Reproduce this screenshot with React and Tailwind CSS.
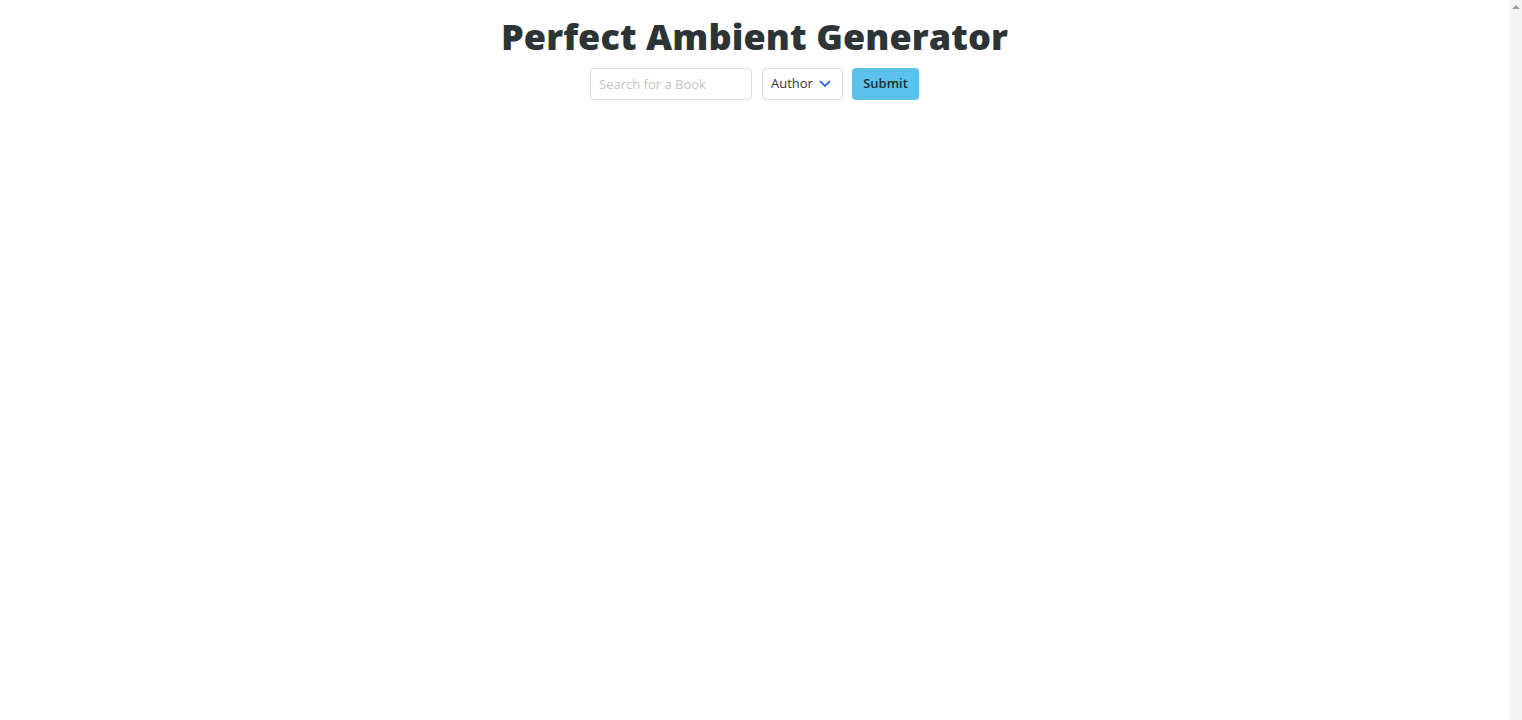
import { useState } from "react";

export default function App() {
  const [query, setQuery] = useState("");
  const [field, setField] = useState("Author");

  return (
    <div className="flex h-[720px] w-full overflow-hidden bg-white font-['Open_Sans',sans-serif]">
      <div className="flex flex-1 flex-col items-center">
        {/* Title */}
        <h1 className="mt-[12px] text-[36px] font-extrabold leading-[50px] tracking-[0.1px] text-[#2d3436]">
          Perfect Ambient Generator
        </h1>

        {/* Search form */}
        <form
          className="mt-[6px] flex items-center"
          onSubmit={(e) => e.preventDefault()}>
          <input
            value={query}
            onChange={(e) => setQuery(e.target.value)}
            placeholder="Search for a Book"
            className="h-[32px] w-[162px] rounded-[4px] border border-[#dcdcdc] px-[8px] text-[13px] text-[#333] placeholder:text-[#c4c4c4] outline-none"
          />
          <div className="relative ml-[10px]">
            <select
              value={field}
              onChange={(e) => setField(e.target.value)}
              className="h-[32px] w-[81px] appearance-none rounded-[4px] border border-[#dcdcdc] bg-white pl-[8px] text-[13px] text-[#333] outline-none">
              <option>Author</option>
              <option>Title</option>
            </select>
            <svg
              className="pointer-events-none absolute right-[12px] top-[12px]"
              width="12"
              height="8"
              viewBox="0 0 12 8"
              fill="none">
              <path d="M1.5 1.5L6 6L10.5 1.5" stroke="#3b6fe0" strokeWidth="1.8" strokeLinecap="round" strokeLinejoin="round" />
            </svg>
          </div>
          <button
            type="submit"
            className="ml-[9px] h-[32px] w-[67px] rounded-[4px] bg-[#5bc2ee] text-[13px] font-semibold text-[#1f2d33]">
            Submit
          </button>
        </form>
      </div>

      {/* Scrollbar */}
      <div className="flex w-[13px] flex-col items-center bg-[#f5f5f5] pt-[5px]">
        <div className="h-0 w-0 border-x-[4px] border-b-[4px] border-x-transparent border-b-[#a3a3a3]" />
      </div>
    </div>
  );
}
